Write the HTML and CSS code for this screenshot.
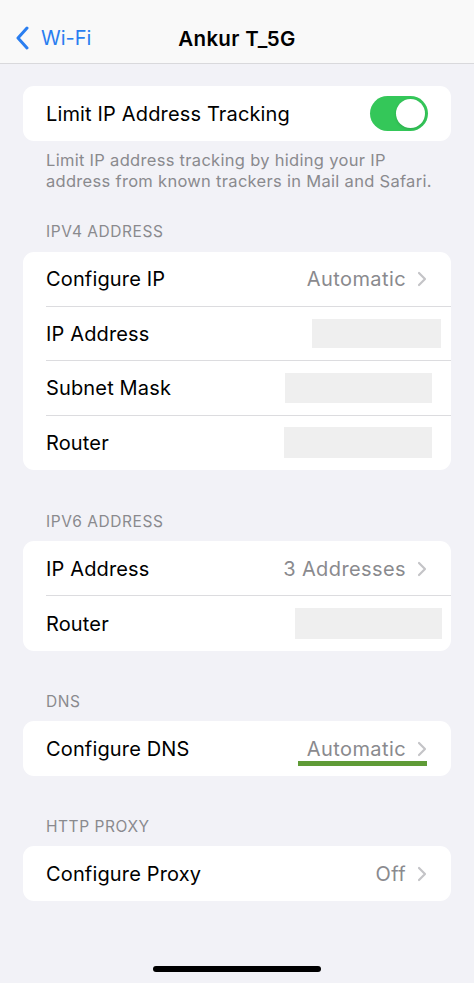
FILE: index.html
```html
<!DOCTYPE html>
<html>
<head>
<meta charset="utf-8">
<link rel="stylesheet" href="styles.css">
</head>
<body>
<div class="screen">
  <header class="nav">
    <div class="back">
      <svg class="back-chev" width="14" height="24" viewBox="0 0 14 24"><path d="M12 2 L3 12 L12 22" fill="none" stroke="#2a7ef0" stroke-width="3" stroke-linecap="round" stroke-linejoin="round"/></svg>
      <span class="back-text">Wi-Fi</span>
    </div>
    <div class="title">Ankur T_5G</div>
  </header>

  <main class="content">
    <div class="card first">
      <div class="row">
        <span class="label">Limit IP Address Tracking</span>
        <span class="toggle"><span class="thumb"></span></span>
      </div>
    </div>
    <p class="footer">Limit IP address tracking by hiding your IP address from known trackers in Mail and Safari.</p>

    <div class="section-label s-ipv4">IPV4 ADDRESS</div>
    <div class="card ipv4">
      <div class="row sep">
        <span class="label">Configure IP</span>
        <span class="value">Automatic<svg class="chev" width="10" height="16" viewBox="0 0 10 16"><path d="M2 2 L8 8 L2 14" fill="none" stroke="#c4c4c7" stroke-width="2.2" stroke-linecap="round" stroke-linejoin="round"/></svg></span>
      </div>
      <div class="row sep">
        <span class="label">IP Address</span>
        <span class="redact r-ip4"></span>
      </div>
      <div class="row sep">
        <span class="label">Subnet Mask</span>
        <span class="redact r-mask"></span>
      </div>
      <div class="row">
        <span class="label">Router</span>
        <span class="redact r-router4"></span>
      </div>
    </div>

    <div class="section-label s-ipv6">IPV6 ADDRESS</div>
    <div class="card">
      <div class="row sep">
        <span class="label">IP Address</span>
        <span class="value">3 Addresses<svg class="chev" width="10" height="16" viewBox="0 0 10 16"><path d="M2 2 L8 8 L2 14" fill="none" stroke="#c4c4c7" stroke-width="2.2" stroke-linecap="round" stroke-linejoin="round"/></svg></span>
      </div>
      <div class="row">
        <span class="label">Router</span>
        <span class="redact r-router6"></span>
      </div>
    </div>

    <div class="section-label">DNS</div>
    <div class="card">
      <div class="row dns">
        <span class="label">Configure DNS</span>
        <span class="value">Automatic<svg class="chev" width="10" height="16" viewBox="0 0 10 16"><path d="M2 2 L8 8 L2 14" fill="none" stroke="#c4c4c7" stroke-width="2.2" stroke-linecap="round" stroke-linejoin="round"/></svg></span>
        <span class="highlight"></span>
      </div>
    </div>

    <div class="section-label">HTTP PROXY</div>
    <div class="card">
      <div class="row">
        <span class="label">Configure Proxy</span>
        <span class="value">Off<svg class="chev" width="10" height="16" viewBox="0 0 10 16"><path d="M2 2 L8 8 L2 14" fill="none" stroke="#c4c4c7" stroke-width="2.2" stroke-linecap="round" stroke-linejoin="round"/></svg></span>
      </div>
    </div>
  </main>

  <div class="home-wrap"><div class="home"></div></div>
</div>
</body>
</html>
```

FILE: styles.css
```css
* { box-sizing: border-box; }
html, body {
  margin: 0;
  padding: 0;
  background: #f2f2f7;
}
body {
  font-family: Inter, "Noto Sans", "Liberation Sans", sans-serif;
  color: #000;
  -webkit-font-smoothing: antialiased;
}
.screen {
  width: 474px;
  height: 983px;
  display: flex;
  flex-direction: column;
  background: #f2f2f7;
  overflow: hidden;
}
.nav {
  height: 64px;
  flex: none;
  background: #f9f9f9;
  border-bottom: 1px solid #d9d9dc;
  display: flex;
  align-items: center;
  justify-content: center;
  position: relative;
  padding-top: 13px;
}
.back {
  position: absolute;
  left: 15px;
  top: 26px;
  display: flex;
  align-items: center;
  gap: 12px;
}
.back-chev { display: block; }
.back-text {
  color: #2a7ef0;
  font-size: 20px;
  letter-spacing: 0;
}
.title {
  font-size: 20.5px;
  font-weight: 600;
  letter-spacing: 0.3px;
}
.content {
  padding: 22px 23px 0;
  flex: 1;
}
.card {
  background: #fff;
  border-radius: 11px;
  overflow: hidden;
}
.row {
  height: 55px;
  display: flex;
  align-items: center;
  justify-content: space-between;
  padding: 0 24px 0 23px;
  position: relative;
}
.ipv4 .row { height: 54.5px; }
.row.sep::after {
  content: "";
  position: absolute;
  left: 23px;
  right: 0;
  bottom: 0;
  height: 1px;
  background: #dcdcdf;
}
.label {
  font-size: 20px;
  letter-spacing: 0.15px;
}
.value {
  font-size: 20px;
  letter-spacing: 0.4px;
  color: #8a8a8e;
  display: flex;
  align-items: center;
  gap: 11px;
}
.chev { display: block; }
.toggle {
  width: 58px;
  height: 35px;
  border-radius: 18px;
  background: #34c759;
  display: flex;
  align-items: center;
  justify-content: flex-end;
  padding-right: 3px;
  margin-right: -1px;
}
.thumb {
  width: 29px;
  height: 29px;
  border-radius: 50%;
  background: #fff;
  box-shadow: 0 1px 3px rgba(0,0,0,0.15);
}
.footer {
  margin: 9px 0 0;
  padding: 0 8px 0 23px;
  font-size: 16.5px;
  line-height: 21px;
  color: #8a8a8e;
  letter-spacing: 0.3px;
}
.section-label {
  margin: 41px 0 9px;
  padding-left: 23px;
  font-size: 15.5px;
  line-height: 20px;
  color: #8a8a8e;
  letter-spacing: 0.55px;
}
.section-label.s-ipv4 { margin-top: 30px; margin-bottom: 10px; }
.section-label.s-ipv6 { margin-top: 42px; }
.redact {
  height: 30px;
  background: #efefef;
  display: block;
}
.r-ip4 { width: 129px; margin-right: -14px; height: 29px; }
.r-mask { width: 147px; margin-right: -5px; }
.r-router4 { width: 148px; margin-right: -5px; height: 31px; }
.r-router6 { width: 147px; margin-right: -15px; height: 31px; }
.highlight {
  position: absolute;
  right: 24px;
  top: 40px;
  width: 129px;
  height: 5px;
  background: #5f9b37;
}
.home-wrap {
  flex: none;
  height: 17px;
  display: flex;
  justify-content: center;
}
.home {
  width: 168px;
  height: 6px;
  border-radius: 3px;
  background: #000;
}
```
